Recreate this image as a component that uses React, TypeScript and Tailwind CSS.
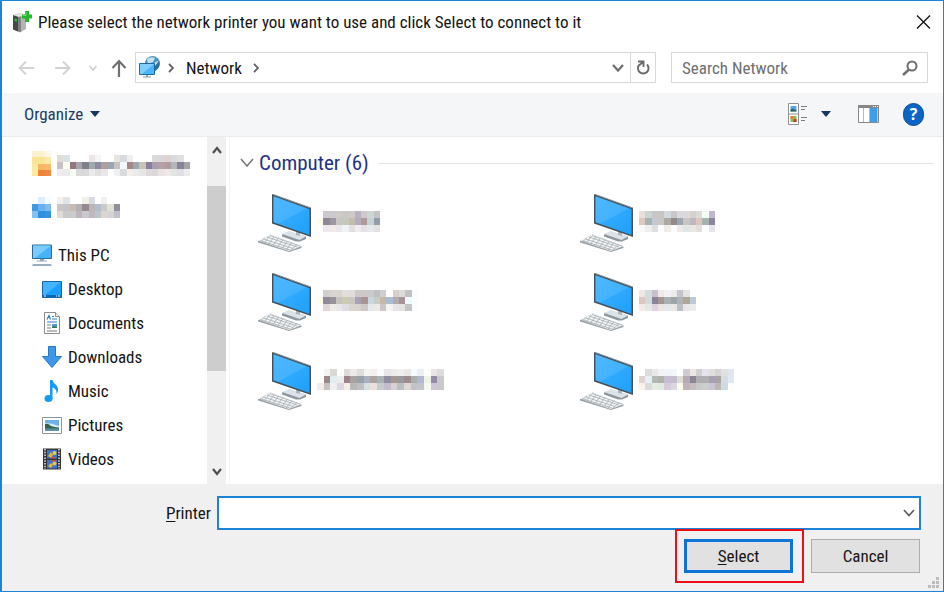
import type { ReactNode } from "react";

type MosaicProps = { rows: string[]; className: string; label: string };

// Each row is a list of hex colours, "-" leaves the cell empty.
const Mosaic = ({ rows, className, label }: MosaicProps) => {
  const cols = rows[0].split(" ").length;
  return (
    <svg
      viewBox={`0 0 ${cols} ${rows.length}`}
      preserveAspectRatio="none"
      shapeRendering="crispEdges"
      role="img"
      aria-label={label}
      className={`shrink-0 ${className}`}
    >
      {rows.map((row, y) =>
        row
          .split(" ")
          .map((c, x) =>
            c === "-" ? null : (
              <rect key={`${x}-${y}`} x={x} y={y} width="1" height="1" fill={`#${c}`} />
            )
          )
      )}
    </svg>
  );
};

const computers = [
  {
    width: "w-[63px]",
    rows: [
      "- cdc8d0 cbc9cc d0cbc8 cac8c4 d0c9c8 b9b0c2 cfc8cc cdd6d2 c4c4c8",
      "fdfdea 8f8798 9c98a2 c8c6c4 c6c8bc c4bcb0 b4adc0 b09a98 c5d3d0 929ca8",
      "- eee8ec f2eaea ebe6ea f0f2f6 e2e0de f2ecf0 e6e0e8 e6e8ec e0e2e0",
    ],
  },
  {
    width: "w-[76px]",
    rows: [
      "eadedb c8d5d2 c9c6c8 c8c4c4 d2dade c8c8cc dad8dc dcd8dc d4d0cc dcdad8 f4fcf6 c0b8cc",
      "dfc8c2 a6b4b0 c4c8d6 c9c6c4 aea8a4 928a88 9ca6b4 c6c6c4 bdb8bc dfc4c0 a4b4ac 8c84a0",
      "f8f8f6 eeeeee dedede fbfdff f0ece8 fafcfe eeeae8 e0e6e8 eae6e2 e2dedc fbfdfd e8e4ec",
    ],
  },
  {
    width: "w-[101px]",
    rows: [
      "- d2cfd0 d8d5cf d8d5cf e2dedb e0dcda d0c8c8 cfc8c8 c9c8cc c0bfc0 cfcdd0 - d8cfcb dedad8 c2c0c2 fafdff",
      "fdfde8 8f889b 96939b c6c3c0 cccab6 c9c6c4 a9a0b8 a99393 c8d8e2 cacaca c9b8a0 a8bdd6 b5a8ae a89392 edfaff fbfdff",
      "- e2d5da eeeae6 e8e6e6 e0dce4 d9d5cf d9d2cf cfcac8 e4e8ec efe9e6 cdc6c6 f6f5f4 e6e4ea e6e2e2 c4c4c4 fcfdff",
    ],
  },
  {
    width: "w-[57px]",
    rows: [
      "f0e6e6 d2dedb cabfcf f2e8ea f3f1f3 ecebec c4c4cc e4e4e2 -",
      "dfc6c0 cfdcda 8c829c a89494 a9b0b2 9ca6aa b0b4b8 b1a695 bcc8dc",
      "f4eae8 e2e8e4 dcd2e0 efe2e2 e4e8ea e9e8e6 bcc0c6 e8e8e8 ebebea",
    ],
  },
  {
    width: "w-[127px]",
    rows: [
      "- f2f3f3 dcd8d6 fbfcfc dedad9 efe8e6 dcdcda f4f4f2 f4efec f8fcff e8e5e8 ecebe9 eeefef ede6e6 f6fbfe eceff6 fdfdfa e8e4e8 dcdcdc",
      "- 9c8788 e0eef2 eeeeee 9b8388 aaa2a2 98a2aa a8b2bc ada39e a9b2b6 8f8fa4 a3978e 989aa2 9e8b8d a8b0b0 b2b8d0 eef3e6 928aa8 c9c9c9",
      "f5ebeb c6c2c2 efefef dcd8e2 f8ebe8 b8b8b8 c0c0c0 d6e0e2 ebe0dc c6cccc c4bccc dad0d4 b9c0c0 e0d8d6 c2c2c8 c4c4cc f5f9f0 cec6d6 c9c9c9",
    ],
  },
  {
    width: "w-[95px]",
    rows: [
      "- dddcda e8eaea f3f3f5 f0f3f8 f2f6fa - cdccd2 efe6e2 d2cfd0 e6e2ee e2dedc d6d2d6 e0e0e2 dee6f0",
      "e2d2ce e4f2f6 b5b9b0 aeb4ac c8bccf c6bed0 dfdfd0 b8aab4 8c8796 b0aeb0 b0aeae a6a0b6 aca49c d5dce4 dfe8f4",
      "fbf2ee dadcdc e8eae6 e0ece2 d4cada dcd8e2 fbfbea bfb2bc c6bcbe cac8c8 cacecc ccc4d6 bcb6b4 d0d8e6 -",
    ],
  },
];

const Computer = () => (
  <svg viewBox="0 0 54 58" className="h-[58px] w-[54px] shrink-0" aria-hidden="true">
    <defs>
      <linearGradient id="screen" x1="0" y1="0" x2="1" y2="1">
        <stop offset="0" stopColor="#3fb2ff" />
        <stop offset="1" stopColor="#1fa0fb" />
      </linearGradient>
    </defs>
    <path d="M24 40.5 31 37.5 48 42.5V45L42 47.5 38 47.5 24 42.5Z" fill="#8d979e" />
    <path d="M24 40 31 37 48 42.5 41.5 46Z" fill="#dce3e8" />
    <path d="M38 35v6l4 1v-6Z" fill="#aeb7bd" />
    <path d="M14 0 53 14V43L14 29.5Z" fill="#45515a" />
    <path d="M14 0 53 14" stroke="#8c959b" />
    <path d="M15.5 2.2 51.5 15.2V41L15.5 28.3Z" fill="url(#screen)" />
    <path d="M15.5 2.2 49 14.3 20 29.8 15.5 28.3Z" fill="#69c4ff" opacity=".35" />
    <path d="M0 47 12.500 40.500 43.500 52.500V54L31 58 0 48.500Z" fill="#9ba3a8" />
    <path d="M0 46.500 12.500 40.500 43.500 52 31 57Z" fill="#f2f4f5" />
    <path
      d="M2 46.600 32 56M5.500 45 35 54.500M9 43 39 53M12 41.500 42 52M7 43.500 3 47.500M11.500 42 6.500 48.500M16 43 10.500 50M20.500 44 15 51.500M25 45.500 19.500 53M29.500 47 24 54.500M34 48.500 28 56M39 50.500 32 57"
      stroke="#a3abb0"
      strokeWidth=".8"
      fill="none"
    />
  </svg>
);

const Icon = ({ children }: { children: ReactNode }) => (
  <svg viewBox="0 0 20 24" className="h-6 w-5 shrink-0" aria-hidden="true">
    {children}
  </svg>
);

const places = [
  {
    name: "Desktop",
    icon: (
      <>
        <path d="M.5 4.500h19v16H.5z" fill="#1a9fff" stroke="#1467a8" />
        <path d="M1 5h18L3 18H1z" fill="#45b3ff" />
        <path d="M1 19h18" stroke="#07569c" strokeWidth="1.500" />
        <path d="M2 19h2M14 19h1M16 19h2" stroke="#fff" />
      </>
    ),
  },
  {
    name: "Documents",
    icon: (
      <>
        <path d="M2.500 1.500h11l4 4v17h-15z" fill="#fff" stroke="#8b8b8b" />
        <path d="M13.500 1.500v4h4" fill="#eee" stroke="#8b8b8b" />
        <path d="M5 8.500 7 4.500 8.500 8.500M10 5.500h2M10 8h5M5 11h10" stroke="#2583cf" fill="none" strokeWidth="1.200" />
        <path d="M5 14h4M5 17h4M5 20h10" stroke="#777" />
        <path d="M10 13h5v4h-5z" fill="#4f9bd0" />
        <path d="M10 17v-1l2-1 3 1v1z" fill="#3b7460" />
      </>
    ),
  },
  {
    name: "Downloads",
    icon: <path d="M6.500 1.500h7v10h6L10 22.500.5 11.500h6z" fill="#3c98e8" stroke="#2b78c2" />,
  },
  {
    name: "Music",
    icon: (
      <>
        <ellipse cx="6.500" cy="19.500" rx="4" ry="3.500" fill="#159bf3" />
        <path d="M8 1h2.500c.5 4 6 4.500 5.500 10 0 1.500-.5 2.500-1.500 4 .3-4-1.500-6-4-6.500V20H8z" fill="#159bf3" />
      </>
    ),
  },
  {
    name: "Pictures",
    icon: (
      <>
        <path d="M.5 4.500h19v16H.5z" fill="#fff" stroke="#8e9499" />
        <path d="M3 7h14v11H3z" fill="#6fb0e8" />
        <path d="M3 10q7 0 14 3v2H3z" fill="#d7ebf5" />
        <path d="M3 11q3-1 6 2 3 1 8 1.500V16H3z" fill="#35654f" />
        <path d="M3 15.500h14V18H3z" fill="#5e91a5" />
      </>
    ),
  },
  {
    name: "Videos",
    icon: (
      <>
        <path d="M1 1.500h18v21H1z" fill="#343434" />
        <path d="M5 3h10v8.500H5zM5 13h10v8.500H5z" fill="#3f71cf" />
        <path d="M3 2v20M17 2v20" stroke="#e8e8e8" strokeWidth="1.500" strokeDasharray="1.500 1.300" />
        <path d="M6 9l3-4 2 3-2 3zM6 19l3-3 2 2-2 3z" fill="#e2b92e" />
        <circle cx="12.500" cy="6" r="2" fill="#f3cd3b" />
        <circle cx="12.500" cy="16.500" r="2" fill="#f0c238" />
        <path d="M9 10h5v1.500H9zM10 13h4v1.500h-4z" fill="#d5542b" />
      </>
    ),
  },
];

const TitleBar = () => (
  <header className="flex h-[42px] items-center pl-[10px] pr-3">
    <svg viewBox="0 0 20 22" className="h-[22px] w-5" aria-hidden="true">
      <path d="M1 4 8 2l6 2v14l-6 3.500-7-3z" fill="#b4b4b4" />
      <path d="M1 4 6 5.500v15L1 18.500z" fill="#484848" />
      <path d="M1 4 8 2l6 2-7 2z" fill="#e2e2e2" />
      <path d="M6 6 9 5.500V21l-3-.5z" fill="#808080" />
      <path d="M2.500 7.500 5 8v2.500l-2.500-.5z" fill="#22c329" />
      <path d="M13 0h4v3.500h3v4h-3V11h-4V7.500h-3v-4h3z" fill="#22b92c" />
      <path d="M14 1v3.500h-3" stroke="#72df72" fill="none" />
    </svg>
    <h1 className="ml-1.5 grow whitespace-nowrap">
      Please select the network printer you want to use and click Select to connect to it
    </h1>
    <button type="button" aria-label="Close">
      <svg viewBox="0 0 15 16" className="h-4 w-[15px]" stroke="#111" strokeWidth="1.300">
        <path d="M1 1.500 14 14.500M14 1.500 1 14.500" />
      </svg>
    </button>
  </header>
);

const NavBar = () => (
  <nav className="flex h-[50px] items-start pl-4 pr-[15px] pt-[9px]">
    <div className="flex h-[31px] w-[117px] items-center">
      <button type="button" aria-label="Back">
        <svg viewBox="0 0 16 16" className="h-4 w-4" fill="none" stroke="#d2d2d2" strokeWidth="1.800">
          <path d="M16 8H1M8 1.500 1.500 8 8 14.500" />
        </svg>
      </button>
      <button type="button" aria-label="Forward" className="ml-[21px]">
        <svg viewBox="0 0 16 16" className="h-4 w-4" fill="none" stroke="#d2d2d2" strokeWidth="1.800">
          <path d="M0 8h15M8 1.500 14.500 8 8 14.500" />
        </svg>
      </button>
      <button type="button" aria-label="Recent locations" className="ml-[18px]">
        <svg viewBox="0 0 8 8" className="h-2 w-2" fill="none" stroke="#cfcfcf" strokeWidth="1.600">
          <path d="M.5 2 4 6 7.500 2" />
        </svg>
      </button>
      <button type="button" aria-label="Up" className="ml-[14px]">
        <svg viewBox="0 0 16 18" className="h-[18px] w-4" fill="none" stroke="#707070" strokeWidth="2.200">
          <path d="M8 18V2M1.500 9 8 2l6.500 7" />
        </svg>
      </button>
    </div>
    <div className="flex h-[31px] grow items-center border border-[#d9d9d9]">
      <svg viewBox="0 0 21 24" className="ml-[3px] h-6 w-[21px]" aria-hidden="true">
        <circle cx="13.500" cy="7.500" r="7.500" fill="#4f95bd" />
        <path d="M8 3q4-3 8-1l-2 4-5 2zM15 7l4-2 1 4-3 4z" fill="#c4e2ee" />
        <path d="M20 5q2 6-4 10l-1-4z" fill="#2f6f9c" />
        <path d="M.5 7.500h15v11H.5z" fill="#49b6fb" stroke="#1e6ba5" />
        <path d="M1 8h14L3 18H1z" fill="#7fceff" />
        <path d="M7 19h2v2H7zM4 20.500h8v1H4z" fill="#8ca3b3" />
      </svg>
      <svg viewBox="0 0 6 10" className="ml-2 h-2.5 w-1.5" fill="none" stroke="#666" strokeWidth="1.800">
        <path d="M1 1l4 4-4 4" />
      </svg>
      <a href="#network" className="ml-3">
        Network
      </a>
      <svg viewBox="0 0 6 10" className="ml-[11px] h-2.5 w-1.5" fill="none" stroke="#666" strokeWidth="1.800">
        <path d="M1 1l4 4-4 4" />
      </svg>
      <button type="button" aria-label="Previous locations" className="ml-auto mr-1.5">
        <svg viewBox="0 0 12 10" className="h-2.5 w-3" fill="none" stroke="#707070" strokeWidth="2.200">
          <path d="M1 2l5 5.500L11 2" />
        </svg>
      </button>
      <button
        type="button"
        aria-label="Refresh"
        className="flex h-full w-[25px] items-center justify-center border-l border-[#d9d9d9]"
      >
        <svg viewBox="0 0 14 16" className="h-4 w-3.5" fill="none" stroke="#6a6a6a" strokeWidth="1.900">
          <path d="M3.500 4.500a5.300 5.300 0 1 0 7.500 0M2 1.500h5.500V7M7 2 3.500 5" />
        </svg>
      </button>
    </div>
    <div className="ml-[15px] flex h-[31px] w-[257px] items-center border border-[#d9d9d9] pl-2.5 pr-[9px]">
      <input
        type="search"
        aria-label="Search Network"
        placeholder="Search Network"
        className="w-0 grow outline-none placeholder:text-[#6f6f6f]"
      />
      <svg viewBox="0 0 16 16" className="h-4 w-4" fill="none" stroke="#6f6f6f" strokeWidth="2">
        <circle cx="10" cy="6" r="4.500" />
        <path d="M7 9.500 1 15" strokeWidth="2.400" />
      </svg>
    </div>
  </nav>
);

const Toolbar = () => (
  <div className="flex h-11 items-center border-b border-[#e9ebed] bg-[#f4f6f8] pb-px pl-[22px] pr-[19px] text-[#1e3a63]">
    <button type="button" className="flex items-center gap-[7px]">
      Organize
      <svg viewBox="0 0 10 6" className="h-1.5 w-2.5" fill="#17365f">
        <path d="M0 0h10L5 6z" />
      </svg>
    </button>
    <button type="button" aria-label="Change your view" className="ml-auto flex items-center gap-[13px]">
      <svg viewBox="0 0 20 22" className="h-[22px] w-5">
        <path d="M.5.5h10v21H.5zM.5 11h10" fill="#fff" stroke="#929292" />
        <path d="M2.500 3h6v5.500h-6z" fill="#58a5e8" />
        <path d="M2.500 6.500 5 5.500l3.500 2v1h-6z" fill="#2f6759" />
        <path d="M2.500 13h6v6h-6z" fill="#8cbf4f" />
        <path d="M2.500 13h3v3h-3z" fill="#e8823a" />
        <path d="M6 16h2.500v3H5z" fill="#c03f35" />
        <path d="M13 3.500h6M13 6.500h4M13 14.500h6M13 17.500h4" stroke="#7c7c7c" />
      </svg>
      <svg viewBox="0 0 10 6" className="h-1.5 w-2.5" fill="#17365f">
        <path d="M0 0h10L5 6z" />
      </svg>
    </button>
    <button type="button" aria-label="Show the preview pane" className="ml-[27px]">
      <svg viewBox="0 0 21 18" className="h-[18px] w-[21px]">
        <path d="M.5.5h20v17H.5z" fill="#fff" stroke="#868686" />
        <path d="M0 0h21v3H0z" fill="#868686" />
        <path d="M15 1.500h1M17 1.500h1M19 1.500h1" stroke="#fff" />
        <path d="M5.500 3v14M11.500 3v14" stroke="#b8b8b8" />
        <path d="M12 3h7.500v14H12z" fill="#3f9ce8" />
      </svg>
    </button>
    <button
      type="button"
      aria-label="Get help"
      className="ml-6 flex h-[23px] w-[21px] items-center justify-center rounded-full border border-[#0a4c93] bg-[#0a66c6] font-['Open_Sans'] text-base font-bold text-white"
    >
      ?
    </button>
  </div>
);

const Sidebar = () => (
  <aside className="flex w-[227px] shrink-0 pr-[3px]">
    <ul className="grow pl-[30px] pt-3.5">
      <li className="flex h-[25px] items-end gap-1.5">
        <Mosaic
          label="Folder"
          className="h-[25px] w-[19px]"
          rows={["fbf2cf fbf2cf fdf8e6", "fbe494 fbe494 fce9a8", "fbe9a0 f5b666 f7b96a", "fbe9a0 ee8438 ee8a40"]}
        />
        <Mosaic
          label="Hidden folder name"
          className="h-[21px] w-[133px]"
          rows={[
            "dddddb dbe2e6 - - - ece6e6 f2f6f6 - - e9e4de d9dade efeef0 - - - dadadc dcd6da ded2d2 d9dade e0e0e2 -",
            "c4c4c4 fafdf0 957680 a8a3ac 808088 9da8b0 8f8aa4 b39c9c 98a6b2 c8c2c4 f5f9fd a48886 9ca8b4 c9c3b3 877d9c a8a0b2 b4a0a6 b09ba0 b0b8bc 88829a a3a3a8",
            "efebed ebebed f8fbf4 d9dadc dadadc ebe9eb e0e0e0 ebe6e8 - f0eff2 d9dadc f5efec ecebec e6e6e6 e0dade d9d9dc e9e3e4 efe8e9 e2e4e4 e0dee6 ececec",
          ]}
        />
      </li>
      <li className="mt-[21px] flex h-[21px] items-end gap-1.5">
        <Mosaic
          label="Cloud storage"
          className="h-[21px] w-[19px]"
          rows={["fbfdff dceefa f5fbfe", "3e98e2 6bb0ec 7ebcf0", "84c0f0 2f90df 3494e0"]}
        />
        <Mosaic
          label="Hidden storage name"
          className="h-[21px] w-[63px]"
          rows={[
            "f4f0ee e0e4e6 - - f0efe8 d8dce0 - f0f0f0 - -",
            "c8c6c6 c6c3c8 c6bab2 b2b2b4 9a8890 bab5b8 b5bccc cacaca dfe3d6 928f9b",
            "dddcd5 cacaca cccacc bdb4c0 cac8cc c0b8c0 bcc4cc ded4d0 d4d4d8 c0c0c8",
          ]}
        />
      </li>
      <li className="mt-5">
        <a href="#this-pc" className="flex h-[34px] items-center gap-1.5">
          <svg viewBox="0 0 20 22" className="h-[22px] w-5 shrink-0" aria-hidden="true">
            <path d="M.5 1h19v13.500H.5z" fill="#45b4fb" stroke="#286c98" />
            <path d="M1 1.500h18L3 14H1z" fill="#7bcbff" />
            <path d="M8 15h4v2H8zM5 16.500h10v1H5z" fill="#96a8b8" />
            <path d="M1 20h18l1 2H0z" fill="#9caec1" />
          </svg>
          This PC
        </a>
        <ul className="pl-[10px]">
          {places.map((place) => (
            <li key={place.name}>
              <a href={`#${place.name}`} className="flex h-[34px] items-center gap-1.5">
                <Icon>{place.icon}</Icon>
                {place.name}
              </a>
            </li>
          ))}
        </ul>
      </li>
    </ul>
    <div className="flex w-[19px] shrink-0 flex-col bg-[#f0f0f0]">
      <button type="button" aria-label="Scroll up" className="flex h-[49px] justify-center pt-[9px]">
        <svg viewBox="0 0 10 8" className="h-2 w-2.5" fill="none" stroke="#505050" strokeWidth="2.200">
          <path d="M1 7l4-5 4 5" />
        </svg>
      </button>
      <div className="h-[185px] bg-[#cdcdcd]" />
      <button type="button" aria-label="Scroll down" className="mt-auto flex justify-center pb-2">
        <svg viewBox="0 0 10 8" className="h-2 w-2.5" fill="none" stroke="#505050" strokeWidth="2.200">
          <path d="M1 1l4 5 4-5" />
        </svg>
      </button>
    </div>
  </aside>
);

const FileList = () => (
  <main className="grow border-l border-[#f4f4f4] pl-[10px] pr-[9px]">
    <h2 className="flex items-center pt-3 text-[21px] leading-7 text-[#1e3287]">
      <button type="button" className="flex items-center gap-[5px]">
        <svg viewBox="0 0 14 10" className="h-2.5 w-3.5" fill="none" stroke="#777" strokeWidth="1.500">
          <path d="M1 1l6 7 6-7" />
        </svg>
        Computer (6)
      </button>
      <span className="ml-[9px] h-px grow bg-[#e2e2e2]" />
    </h2>
    <ul className="mt-[17px] grid grid-cols-2 gap-y-[21px] pl-[18px] pr-[33px]">
      {computers.map((computer, i) => (
        <li key={i} className="flex items-center gap-[5px]">
          <Computer />
          <Mosaic label="Hidden computer name" className={`mb-1 h-[21px] ${computer.width}`} rows={computer.rows} />
        </li>
      ))}
    </ul>
  </main>
);

const Footer = () => (
  <form className="relative bg-[#f0f0f0] pb-[18px] pl-[164px] pr-[22px] pt-3" onSubmit={(e) => e.preventDefault()}>
    <div className="flex items-center">
      <label htmlFor="printer" className="w-[51px] shrink-0">
        <span className="underline underline-offset-2">P</span>rinter
      </label>
      <div className="flex h-[34px] grow items-center border-2 border-[#1c83d8] bg-white pr-1">
        <input id="printer" type="text" className="h-full w-0 grow px-2 outline-none" />
        <button type="button" aria-label="Show printers">
          <svg viewBox="0 0 12 8" className="h-2 w-3" fill="none" stroke="#5c5c5c" strokeWidth="1.700">
            <path d="M1 1l5 5.500L11 1" />
          </svg>
        </button>
      </div>
    </div>
    <div className="mt-[9px] flex justify-end gap-[18px] pr-px">
      <div className="relative">
        <button type="submit" className="h-[34px] w-[109px] border-[3px] border-[#0e74d6] bg-[#e1e1e1]">
          <span className="underline underline-offset-2">S</span>elect
        </button>
        <span className="pointer-events-none absolute -bottom-2.5 -left-[9px] -right-[11px] -top-2.5 border-2 border-[#ec0f17]" />
      </div>
      <button type="button" className="h-[34px] w-[109px] border border-[#adadad] bg-[#e1e1e1]">
        Cancel
      </button>
    </div>
    <svg viewBox="0 0 11 12" className="absolute bottom-0.5 right-1 h-3 w-[11px]" fill="#bdbdbd" aria-hidden="true">
      <path d="M8 0h3v3H8zM4 4h3v3H4zM8 4h3v3H8zM0 8h3v3H0zM4 8h3v3H4zM8 8h3v3H8z" />
    </svg>
  </form>
);

const App = () => {
  return (
    <div className="flex min-h-screen flex-col border border-l-2 border-[#1c83d8] bg-white font-['Roboto_Condensed',Roboto,sans-serif] text-[17px] leading-6 text-[#151515]">
      <TitleBar />
      <NavBar />
      <Toolbar />
      <div className="flex grow">
        <Sidebar />
        <FileList />
      </div>
      <Footer />
    </div>
  );
};

export default App;
